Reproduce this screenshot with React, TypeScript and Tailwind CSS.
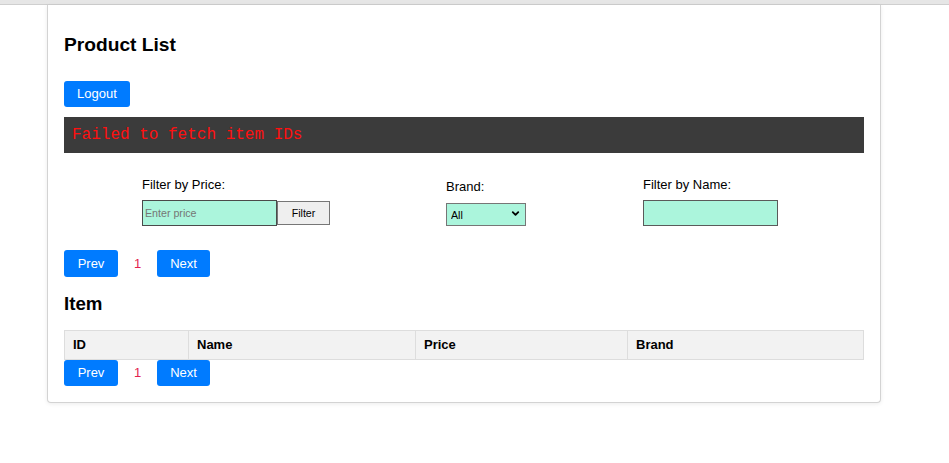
import { ChevronDown } from "lucide-react";

const font = { fontFamily: '"Liberation Sans", Arial, sans-serif' };

function Pager({ tall }: { tall?: boolean }) {
  const h = tall ? "h-[27px]" : "h-[26px]";
  return (
    <div className="flex items-center">
      <button type="button" className={`${h} w-[54px] rounded-[3px] bg-[#007bff] text-[13px] text-white`}>
        Prev
      </button>
      <span className="mx-[15px] w-[9px] text-center text-[13px] text-[#e3224f]">1</span>
      <button type="button" className={`${h} w-[53px] rounded-[3px] bg-[#007bff] text-[13px] text-white`}>
        Next
      </button>
    </div>
  );
}

export default function App() {
  return (
    <div className="min-h-[463px] w-[949px] bg-white text-black" style={font}>
      <div className="h-[5px] border-b border-[#cfcfcf] bg-[#e6e6e6]" />
      <div className="ml-[47px] w-[834px] rounded-b-[4px] border-x border-b border-[#d3d3d3] bg-white px-4 pb-4 pt-[29px] shadow-[0_1px_4px_rgba(0,0,0,0.08)]">
        <h2 className="text-[19.2px] font-bold leading-[22px]">Product List</h2>

        <button type="button" className="mt-[25px] h-[26px] w-[66px] rounded-[3px] bg-[#007bff] text-[13px] text-white">
          Logout
        </button>

        <div
          className="mt-[10px] flex h-[36px] items-center bg-[#3b3b3b] px-2 text-[16px] text-[#ff1010]"
          style={{ fontFamily: '"Liberation Mono", "DejaVu Sans Mono", monospace' }}
        >
          Failed to fetch item IDs
        </div>

        <div className="mt-[24px] flex items-center pl-[78px]">
          <div className="flex flex-col">
            <label className="mb-2 text-[13px] leading-[15px]">Filter by Price:</label>
            <div className="flex items-center">
              <input
                placeholder="Enter price"
                className="h-[26px] w-[135px] border border-[#4a4a4a] bg-[#abf5dc] px-[2px] text-[10.67px] placeholder:text-[#757575]"
              />
              <button type="button" className="h-[24px] w-[53px] border border-[#767676] bg-[#efefef] text-[10.67px]">
                Filter
              </button>
            </div>
          </div>

          <div className="ml-[116px] flex flex-col">
            <label className="mb-2 text-[13px] leading-[15px]">Brand:</label>
            <div className="relative h-[23px] w-[80px]">
              <select className="h-full w-full appearance-none border border-[#767676] bg-[#abf5dc] pl-[4px] text-[10.67px]">
                <option>All</option>
              </select>
              <ChevronDown className="pointer-events-none absolute right-[5px] top-[6px] h-[11px] w-[11px]" strokeWidth={4} />
            </div>
          </div>

          <div className="ml-[117px] flex flex-col">
            <label className="mb-2 text-[13px] leading-[15px]">Filter by Name:</label>
            <input className="h-[26px] w-[135px] border border-[#5a5a5a] bg-[#abf5dc] px-[2px] text-[10.67px]" />
          </div>
        </div>

        <div className="mt-[24px]">
          <Pager tall />
        </div>

        <h3 className="mt-[16px] text-[18.72px] font-bold leading-[22px]">Item</h3>

        <table className="mt-[15px] w-full table-fixed border-collapse text-[13px]">
          <colgroup>
            <col className="w-[124px]" />
            <col className="w-[227px]" />
            <col className="w-[212px]" />
            <col />
          </colgroup>
          <thead>
            <tr className="bg-[#f2f2f2]">
              <th className="border border-[#dddddd] px-2 py-[6px] text-left font-bold leading-[16px]">ID</th>
              <th className="border border-[#dddddd] px-2 py-[6px] text-left font-bold leading-[16px]">Name</th>
              <th className="border border-[#dddddd] px-2 py-[6px] text-left font-bold leading-[16px]">Price</th>
              <th className="border border-[#dddddd] px-2 py-[6px] text-left font-bold leading-[16px]">Brand</th>
            </tr>
          </thead>
          <tbody />
        </table>

        <Pager />
      </div>
    </div>
  );
}
